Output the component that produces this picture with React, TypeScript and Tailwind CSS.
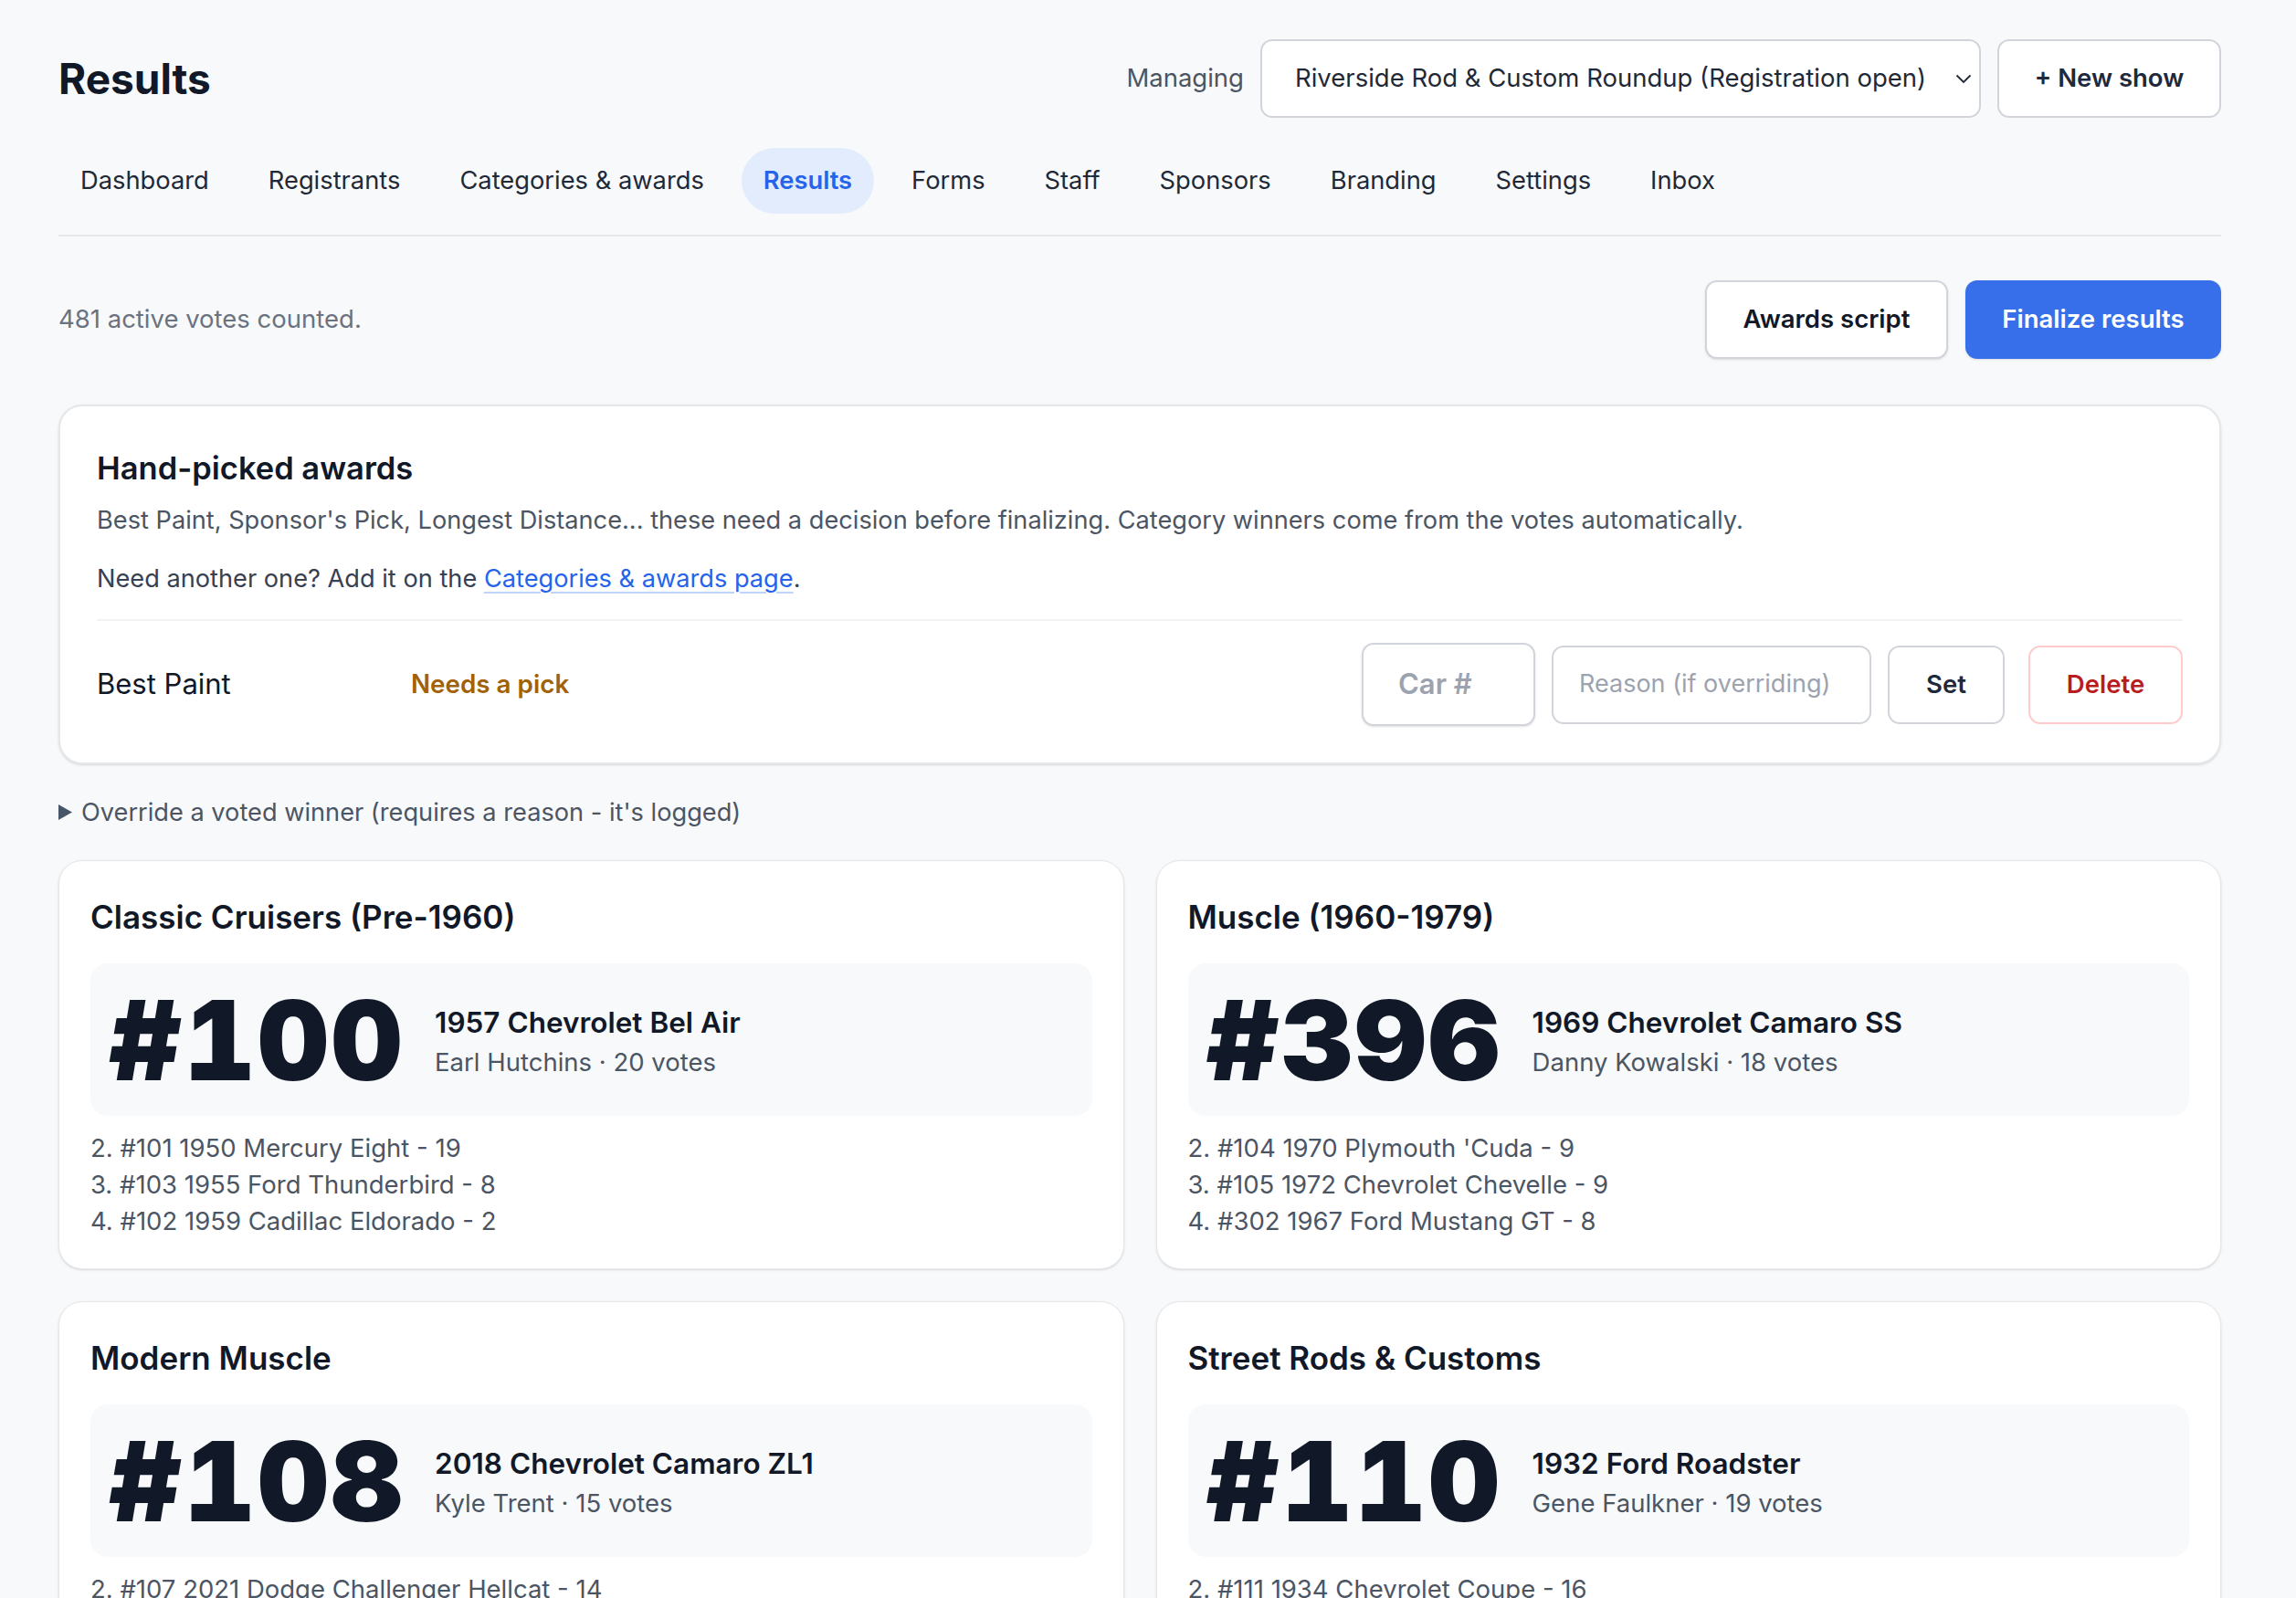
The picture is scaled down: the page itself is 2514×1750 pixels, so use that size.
const tabs = ['Dashboard', 'Registrants', 'Categories & awards', 'Results', 'Forms', 'Staff', 'Sponsors', 'Branding', 'Settings', 'Inbox'];

const categories = [
    {
        title: 'Classic Cruisers (Pre-1960)',
        num: '#100',
        car: '1957 Chevrolet Bel Air',
        owner: 'Earl Hutchins',
        votes: 20,
        others: ['2. #101 1950 Mercury Eight - 19', '3. #103 1955 Ford Thunderbird - 8', '4. #102 1959 Cadillac Eldorado - 2'],
    },
    {
        title: 'Muscle (1960-1979)',
        num: '#396',
        car: '1969 Chevrolet Camaro SS',
        owner: 'Danny Kowalski',
        votes: 18,
        others: ["2. #104 1970 Plymouth 'Cuda - 9", '3. #105 1972 Chevrolet Chevelle - 9', '4. #302 1967 Ford Mustang GT - 8'],
    },
    {
        title: 'Modern Muscle',
        num: '#108',
        car: '2018 Chevrolet Camaro ZL1',
        owner: 'Kyle Trent',
        votes: 15,
        others: ['2. #107 2021 Dodge Challenger Hellcat - 14', '3. #109 2020 Ford Mustang Shelby GT500 - 11', '4. #112 2016 Chevrolet Corvette Z06 - 6'],
    },
    {
        title: 'Street Rods & Customs',
        num: '#110',
        car: '1932 Ford Roadster',
        owner: 'Gene Faulkner',
        votes: 19,
        others: ['2. #111 1934 Chevrolet Coupe - 16', '3. #113 1940 Ford Deluxe - 7', '4. #114 1949 Mercury Lead Sled - 3'],
    },
];

function CategoryCard({ title, num, car, owner, votes, others }: (typeof categories)[number]) {
    return (
        <div className="rounded-[26px] border border-[#e5e7eb] bg-white px-[34px] pt-[41px] pb-[32px] shadow-sm">
            <h3 className="text-[35px] leading-[40px] font-semibold text-[#111827]">{title}</h3>
            <div className="mt-[31px] flex items-center gap-[33px] rounded-[19px] bg-[#f8f9fb] px-[20px] pt-[24px] pb-[22px]">
                <span className="text-[121px] leading-none font-black tracking-[2.5px] text-[#111827] tabular-nums">{num}</span>
                <div className="flex flex-col pt-[4px]">
                    <p className="text-[31.5px] leading-[40px] font-semibold text-[#111827]">{car}</p>
                    <p className="mt-[3px] text-[27.5px] leading-[40px] text-[#4b5563]">
                        {owner} · {votes} votes
                    </p>
                </div>
            </div>
            <div className="mt-[15px] flex flex-col text-[27.5px] leading-[40px] text-[#4b5563]">
                {others.map((line) => (
                    <p key={line}>{line}</p>
                ))}
            </div>
        </div>
    );
}

export default function App() {
    return (
        <div className="min-h-screen bg-[#f8f9fb] font-[Inter,'Noto_Sans',sans-serif] text-[#111827]">
            <div className="pt-[43px] pr-[82px] pl-[64px]">
                {/* header */}
                <div className="flex items-center justify-between">
                    <h1 className="text-[46px] leading-none font-bold">Results</h1>
                    <div className="flex items-center gap-[18px]">
                        <span className="text-[27.5px] text-[#4b5563]">Managing</span>
                        <div className="flex h-[86px] w-[789px] items-center justify-between rounded-[13px] border-2 border-[#d1d5db] bg-white pr-[8px] pl-[36px]">
                            <span className="text-[27.5px] text-[#1f2937]">Riverside Rod &amp; Custom Roundup (Registration open)</span>
                            <svg width="18" height="11" viewBox="0 0 18 11" fill="none">
                                <path d="M1.5 1.5 L9 9 L16.5 1.5" stroke="#1f2937" strokeWidth="1.8" />
                            </svg>
                        </div>
                        <button className="h-[86px] w-[245px] rounded-[13px] border-2 border-[#d1d5db] bg-white text-[27.5px] font-semibold text-[#1e293b]">
                            + New show
                        </button>
                    </div>
                </div>

                {/* tabs */}
                <nav className="mt-[33px] flex gap-[17px] border-b-2 border-[#e5e7eb] pb-[23px]">
                    {tabs.map((t) => (
                        <span
                            key={t}
                            className={`flex h-[72px] items-center rounded-full px-[24px] text-[27.3px] ${
                                t === 'Results' ? 'bg-[#e3ecfd] font-semibold text-[#2563eb]' : 'text-[#1f2937]'
                            }`}
                        >
                            {t}
                        </span>
                    ))}
                </nav>

                {/* toolbar */}
                <div className="mt-[48px] flex items-center justify-between">
                    <p className="text-[27.5px] text-[#6b7280]">481 active votes counted.</p>
                    <div className="flex gap-[19px]">
                        <button className="h-[86px] w-[266px] rounded-[13px] border-2 border-[#d1d5db] bg-white text-[27.5px] font-semibold text-[#111827] shadow-sm">
                            Awards script
                        </button>
                        <button className="h-[86px] w-[280px] rounded-[13px] bg-[#376fea] text-[27.5px] font-semibold text-white shadow-sm">
                            Finalize results
                        </button>
                    </div>
                </div>

                {/* hand-picked awards */}
                <div className="mt-[50px] rounded-[26px] border-2 border-[#e5e7eb] bg-white px-[40px] pt-[47px] pb-[40px] shadow-sm">
                    <h2 className="text-[34.5px] leading-[42px] font-semibold">Hand-picked awards</h2>
                    <p className="mt-[16px] text-[27.2px] leading-[39px] text-[#4b5563]">
                        Best Paint, Sponsor's Pick, Longest Distance... these need a decision before finalizing. Category winners come from the votes automatically.
                    </p>
                    <p className="mt-[25px] text-[27.2px] leading-[39px] text-[#374151]">
                        Need another one? Add it on the{' '}
                        <a className="text-[#2563eb] underline decoration-[#bfd3fb] decoration-2 underline-offset-[5px]">Categories &amp; awards page</a>.
                    </p>
                    <div className="mt-[25px] h-[2px] bg-[#f1f2f4]" />
                    <div className="mt-[24px] flex items-center">
                        <span className="w-[344px] text-[31px] text-[#111827]">Best Paint</span>
                        <span className="text-[27.8px] font-semibold text-[#a16207]">Needs a pick</span>
                        <div className="ml-auto flex items-center gap-[18px]">
                            <div className="flex h-[91px] w-[190px] items-center rounded-[13px] border-2 border-[#d1d5db] bg-white pl-[38px] text-[31px] font-semibold text-[#9ca3af] shadow-sm">
                                Car #
                            </div>
                            <div className="flex h-[86px] w-[350px] items-center rounded-[13px] border-2 border-[#d1d5db] bg-white pl-[28px] text-[27px] text-[#9ca3af]">
                                Reason (if overriding)
                            </div>
                            <button className="h-[86px] w-[128px] rounded-[13px] border-2 border-[#d1d5db] bg-white text-[27.5px] font-semibold text-[#1e293b]">
                                Set
                            </button>
                            <button className="ml-[8px] h-[86px] w-[169px] rounded-[13px] border-2 border-[#fecaca] bg-white text-[27.5px] font-semibold text-[#b91c1c]">
                                Delete
                            </button>
                        </div>
                    </div>
                </div>

                {/* override disclosure */}
                <div className="mt-[33px] flex items-center gap-[10px] text-[27.2px] leading-[39px] text-[#4b5563]">
                    <svg width="15" height="17" viewBox="0 0 15 17">
                        <polygon points="0,0 15,8.5 0,17" fill="#475569" />
                    </svg>
                    <span>Override a voted winner (requires a reason - it's logged)</span>
                </div>

                {/* category results */}
                <div className="mt-[33px] grid grid-cols-2 gap-[35px] pb-[40px]">
                    {categories.map((c) => (
                        <CategoryCard key={c.title} {...c} />
                    ))}
                </div>
            </div>
        </div>
    );
}
